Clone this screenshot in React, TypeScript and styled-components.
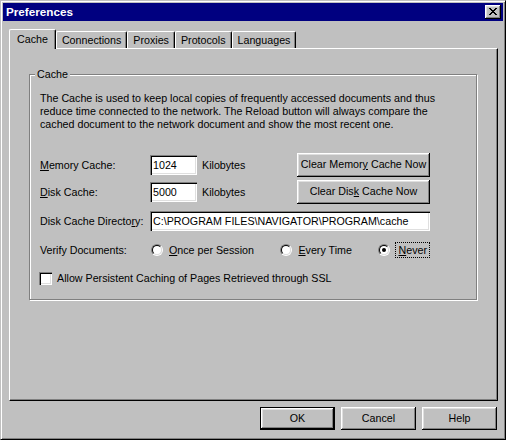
import React from "react";
import styled, { createGlobalStyle } from "styled-components";

const Global = createGlobalStyle`
  html, body { margin: 0; padding: 0; background: #c0c0c0; }
  body {
    font-family: "Liberation Sans", Arial, sans-serif;
    font-size: 10.7px;
    color: #000;
  }
  * { box-sizing: border-box; }
`;

const Window = styled.div`
  width: 506px;
  height: 440px;
  background: #c0c0c0;
  border: 1px solid;
  border-color: #c0c0c0 #000 #000 #c0c0c0;
  box-shadow: inset 1px 1px #fff, inset -1px -1px #808080;
  padding: 2px;
  display: flex;
  flex-direction: column;
`;

const TitleBar = styled.div`
  height: 18px;
  flex: 0 0 18px;
  background: #000080;
  display: flex;
  align-items: center;
  padding: 0 2px 0 3px;
`;

const Title = styled.div`
  flex: 1;
  color: #fff;
  font-weight: bold;
  font-size: 11.7px;
  line-height: 14px;
`;

const Bevel = `
  background: #c0c0c0;
  box-shadow: inset -1px -1px #000, inset 1px 1px #fff, inset -2px -2px #808080, inset 2px 2px #dfdfdf;
`;

const CloseButton = styled.div`
  ${Bevel}
  width: 16px;
  height: 14px;
  display: flex;
  align-items: center;
  justify-content: center;
  padding: 0 1px 1px 0;
`;

const Body = styled.div`
  flex: 1;
  display: flex;
  flex-direction: column;
  padding: 8px 5px 0 6px;
`;

const TabRow = styled.div`
  height: 19px;
  flex: 0 0 19px;
  display: flex;
  align-items: flex-end;
`;

const Tab = styled.div<{ $active?: boolean }>`
  position: relative;
  z-index: ${(p) => (p.$active ? 2 : 1)};
  height: ${(p) => (p.$active ? 20 : 17)}px;
  margin-bottom: ${(p) => (p.$active ? -1 : 0)}px;
  padding: ${(p) => (p.$active ? "0 7px 1px 7px" : "0 5px 0 5px")};
  background: #c0c0c0;
  border-top: 1px solid #fff;
  border-left: 1px solid #fff;
  border-right: 1px solid #000;
  border-radius: 2px 2px 0 0;
  box-shadow: inset -1px 0 #808080;
  display: flex;
  align-items: center;
  white-space: nowrap;
  line-height: 13px;
`;

const Panel = styled.div`
  position: relative;
  height: 353px;
  flex: 0 0 353px;
  border: 1px solid;
  border-color: #fff #000 #000 #fff;
  box-shadow: inset -1px -1px #808080;
  padding: 25px 0 0 19px;
`;

const Group = styled.div`
  position: relative;
  width: 448px;
  height: 226px;
  border: 1px solid #808080;
  box-shadow: inset 1px 1px #fff, 1px 1px #fff;
  padding: 17px 46px 0 10px;
`;

const Legend = styled.div`
  position: absolute;
  top: -7px;
  left: 5px;
  padding: 0 2px;
  background: #c0c0c0;
  line-height: 13px;
`;

const Desc = styled.p`
  margin: 0;
  line-height: 13px;
  white-space: nowrap;
`;

const Row = styled.div<{ $h: number; $mt: number }>`
  display: flex;
  align-items: center;
  height: ${(p) => p.$h}px;
  margin-top: ${(p) => p.$mt}px;
  white-space: nowrap;
`;

const FieldLabel = styled.div`
  width: 110px;
  flex: 0 0 110px;
  line-height: 13px;
`;

const TextBox = styled.div<{ $w: number }>`
  width: ${(p) => p.$w}px;
  height: 20px;
  background: #fff;
  box-shadow: inset 1px 1px #808080, inset 2px 2px #000, inset -1px -1px #fff, inset -2px -2px #dfdfdf;
  padding: 0 2px 0 3px;
  display: flex;
  align-items: center;
  line-height: 13px;
  overflow: hidden;
  white-space: nowrap;
`;

const Unit = styled.div`
  margin-left: 5px;
  line-height: 13px;
`;

const PushButton = styled.div<{ $w: number; $h: number; $default?: boolean }>`
  ${Bevel}
  width: ${(p) => p.$w}px;
  height: ${(p) => p.$h}px;
  flex: 0 0 ${(p) => p.$w}px;
  display: flex;
  align-items: center;
  justify-content: center;
  line-height: 13px;
  padding-bottom: 1px;
  white-space: nowrap;
  border: ${(p) => (p.$default ? "1px solid #000" : "none")};
`;

const ClearButton = styled(PushButton)`
  margin-left: auto;
`;

const RadioOption = styled.div<{ $w?: number }>`
  display: flex;
  align-items: center;
  gap: 4px;
  width: ${(p) => (p.$w ? `${p.$w}px` : "auto")};
  padding-left: 1px;
`;

const RadioDot = styled.span<{ $on?: boolean }>`
  position: relative;
  width: 12px;
  height: 12px;
  flex: 0 0 12px;
  border-radius: 50%;
  border: 1px solid;
  border-color: #808080 #fff #fff #808080;
  &::before {
    content: "";
    position: absolute;
    inset: 0;
    border-radius: 50%;
    border: 1px solid;
    border-color: #000 #dfdfdf #dfdfdf #000;
    background: #fff;
  }
  &::after {
    content: "";
    display: ${(p) => (p.$on ? "block" : "none")};
    position: absolute;
    left: 3px;
    top: 3px;
    width: 4px;
    height: 4px;
    border-radius: 50%;
    background: #000;
  }
`;

const OptionText = styled.span<{ $focus?: boolean }>`
  line-height: 14px;
  padding: 0 2px;
  border: 1px dotted ${(p) => (p.$focus ? "#000" : "transparent")};
  margin-left: ${(p) => (p.$focus ? 1 : -1)}px;
`;

const CheckBox = styled.span`
  width: 13px;
  height: 13px;
  flex: 0 0 13px;
  margin-left: -1px;
  margin-right: 5px;
  background: #fff;
  box-shadow: inset 1px 1px #808080, inset 2px 2px #000, inset -1px -1px #fff, inset -2px -2px #dfdfdf;
`;

const ButtonRow = styled.div`
  display: flex;
  justify-content: flex-end;
  gap: 6px;
  margin-top: 6px;
  padding-right: 1px;
`;

const Mn = styled.span`
  text-decoration: underline;
  text-underline-offset: 1px;
`;

const CloseIcon = () => (
  <svg width="8" height="7" viewBox="0 0 8 7" shapeRendering="crispEdges">
    <path
      fill="#000"
      d="M0 0h2v1H0zM6 0h2v1H6zM1 1h2v1H1zM5 1h2v1H5zM2 2h4v1H2zM3 3h2v1H3zM2 4h4v1H2zM1 5h2v1H1zM5 5h2v1H5zM0 6h2v1H0zM6 6h2v1H6z"
    />
  </svg>
);

const tabs = ["Cache", "Connections", "Proxies", "Protocols", "Languages"];

export default function App() {
  return (
    <>
      <Global />
      <Window>
        <TitleBar>
          <Title>Preferences</Title>
          <CloseButton>
            <CloseIcon />
          </CloseButton>
        </TitleBar>
        <Body>
          <TabRow>
            {tabs.map((t, i) => (
              <Tab key={t} $active={i === 0}>
                {t}
              </Tab>
            ))}
          </TabRow>
          <Panel>
            <Group>
              <Legend>Cache</Legend>
              <Desc>
                The Cache is used to keep local copies of frequently accessed documents and thus
                <br />
                reduce time connected to the network. The Reload button will always compare the
                <br />
                cached document to the network document and show the most recent one.
              </Desc>
              <Row $h={24} $mt={22}>
                <FieldLabel>
                  <Mn>M</Mn>emory Cache:
                </FieldLabel>
                <TextBox $w={47}>1024</TextBox>
                <Unit>Kilobytes</Unit>
                <ClearButton $w={133} $h={24}>
                  Clear Memor<Mn>y</Mn>&nbsp;Cache Now
                </ClearButton>
              </Row>
              <Row $h={24} $mt={3}>
                <FieldLabel>
                  <Mn>D</Mn>isk Cache:
                </FieldLabel>
                <TextBox $w={47}>5000</TextBox>
                <Unit>Kilobytes</Unit>
                <ClearButton $w={133} $h={24}>
                  Clear Dis<Mn>k</Mn>&nbsp;Cache Now
                </ClearButton>
              </Row>
              <Row $h={20} $mt={7}>
                <FieldLabel>
                  Disk Cache Directo<Mn>r</Mn>y:
                </FieldLabel>
                <TextBox $w={280}>C:\PROGRAM FILES\NAVIGATOR\PROGRAM\cache</TextBox>
              </Row>
              <Row $h={16} $mt={11}>
                <FieldLabel>Verify Documents:</FieldLabel>
                <RadioOption $w={132}>
                  <RadioDot />
                  <OptionText>
                    <Mn>O</Mn>nce per Session
                  </OptionText>
                </RadioOption>
                <RadioOption $w={100}>
                  <RadioDot />
                  <OptionText>
                    <Mn>E</Mn>very Time
                  </OptionText>
                </RadioOption>
                <RadioOption>
                  <RadioDot $on />
                  <OptionText $focus>
                    <Mn>N</Mn>ever
                  </OptionText>
                </RadioOption>
              </Row>
              <Row $h={16} $mt={12}>
                <CheckBox />
                <span>Allow Persistent Caching of Pages Retrieved through SSL</span>
              </Row>
            </Group>
          </Panel>
          <ButtonRow>
            <PushButton $w={75} $h={23} $default>
              OK
            </PushButton>
            <PushButton $w={75} $h={23}>
              Cancel
            </PushButton>
            <PushButton $w={75} $h={23}>
              Help
            </PushButton>
          </ButtonRow>
        </Body>
      </Window>
    </>
  );
}
